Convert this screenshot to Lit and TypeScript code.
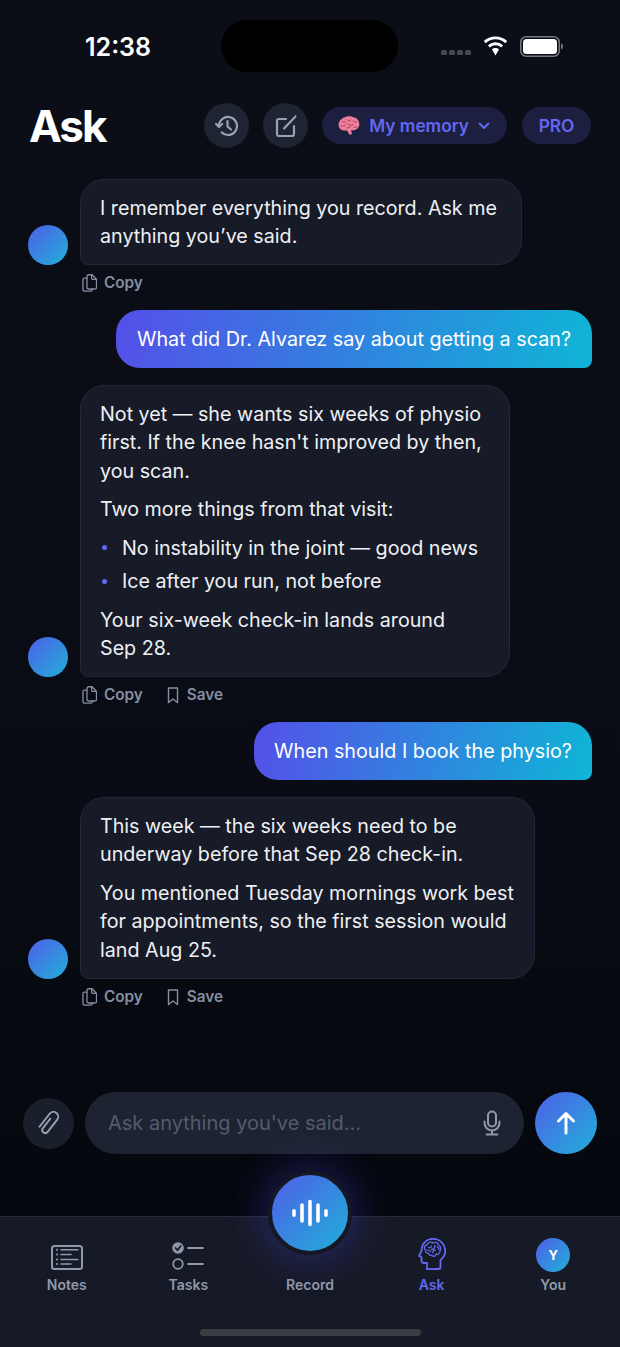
import { LitElement, html, css, svg } from "lit";
import { customElement } from "lit/decorators.js";

const copyIcon = svg`<path d="M8.500 1.500h3.800l4.700 5v8.500a1.700 1.700 0 0 1-1.700 1.700H8.500a1.700 1.700 0 0 1-1.700-1.700V3.200a1.700 1.700 0 0 1 1.700-1.700z"/><path d="M11.800 1.700v3.500a1.300 1.300 0 0 0 1.300 1.300h3.700"/><path d="M6.800 5H4.200a1.700 1.700 0 0 0-1.700 1.700v10.600a1.700 1.700 0 0 0 1.700 1.700h6.600a1.700 1.700 0 0 0 1.700-1.700v-.6"/>`;
const bookmarkIcon = svg`<path d="M4.500 2.500h9v14.500l-4.500-3.500-4.500 3.500z"/>`;

@customElement("app-actions")
class AppActions extends LitElement {
  static properties = { save: { type: Boolean } };
  declare save: boolean;

  static styles = css`
    :host {
      display: flex;
      gap: 24px;
      height: 20px;
      margin: 8px 0 0 52px;
      color: #858fa3;
      font: 600 15.3px/20px Inter, sans-serif;
    }
    .action {
      display: flex;
      align-items: center;
      gap: 7px;
    }
    .copy {
      margin-left: 2px;
    }
    .save {
      gap: 6px;
    }
    svg {
      fill: none;
      stroke: currentColor;
      stroke-width: 1.4;
      stroke-linejoin: round;
      stroke-linecap: round;
    }
  `;

  render() {
    return html`
      <span class="action copy"><svg width="15" height="18" viewBox="1.500 .8 16 19">${copyIcon}</svg>Copy</span>
      ${this.save
        ? html`<span class="action save"><svg width="14" height="18" viewBox="3 1 14 17">${bookmarkIcon}</svg>Save</span>`
        : ""}
    `;
  }
}

@customElement("app-root")
class AppRoot extends LitElement {
  static styles = css`
    :host {
      display: flex;
      flex-direction: column;
      width: 620px;
      height: 1347px;
      overflow: hidden;
      background: linear-gradient(#0b0e16, #090c14 60%, #05070e 90%);
      color: #eef0f4;
      font-family: Inter, sans-serif;
    }
    .status {
      display: flex;
      align-items: center;
      height: 92px;
      padding-right: 57px;
      flex: none;
    }
    .time {
      width: 221px;
      padding: 1px 0 0 85px;
      box-sizing: border-box;
      color: #fff;
      font-size: 25px;
      font-weight: 600;
    }
    .island {
      width: 177px;
      height: 52px;
      border-radius: 26px;
      background: #000;
    }
    .status-right {
      margin-left: auto;
      display: flex;
      align-items: center;
      gap: 11px;
    }
    .dots {
      display: flex;
      gap: 2px;
      margin-top: 13px;
    }
    .dots i {
      width: 6px;
      height: 5px;
      border-radius: 1.5px;
      background: #44474e;
    }
    header {
      display: flex;
      align-items: center;
      height: 45px;
      padding: 11px 29px 0 29px;
      flex: none;
    }
    h1 {
      flex: 1;
      margin: 0;
      font-size: 44px;
      font-weight: 700;
      letter-spacing: -2px;
      color: #fff;
    }
    .round {
      width: 45px;
      height: 45px;
      border-radius: 50%;
      margin-right: 14px;
      background: #1e2431;
      display: flex;
      align-items: center;
      justify-content: center;
      color: #97a2b4;
    }
    .pill {
      height: 37px;
      border-radius: 19px;
      background: #1c1f3f;
      color: #6367f1;
      display: flex;
      align-items: center;
      font-size: 17.3px;
      font-weight: 600;
    }
    .memory {
      padding: 0 17px 0 16px;
      gap: 9px;
      margin-right: 15px;
    }
    .pro {
      width: 69px;
      justify-content: center;
    }
    main {
      flex: 1;
      display: flex;
      flex-direction: column;
      padding: 31px 28px 0;
      font-size: 19.7px;
      line-height: 28.5px;
    }
    .row {
      display: flex;
      align-items: flex-end;
      gap: 12px;
    }
    .avatar {
      width: 40px;
      height: 40px;
      border-radius: 50%;
      background: linear-gradient(135deg, #4f5ee8, #20b0d8);
      flex: none;
    }
    .bubble {
      box-sizing: border-box;
      padding: 13.5px 19px;
      border: 1px solid #232836;
      border-radius: 24px 24px 24px 8px;
      background: #171b27;
    }
    .bubble p {
      margin: 0 0 10px;
    }
    .bubble p:last-child {
      margin: 0;
    }
    ul {
      margin: 0 0 10px;
      padding: 0;
      list-style: none;
    }
    li {
      display: flex;
      align-items: center;
      margin-bottom: 5px;
    }
    li:last-child {
      margin-bottom: 0;
    }
    li::before {
      content: "";
      width: 5px;
      height: 5px;
      margin: 0 15px 0 2px;
      border-radius: 50%;
      background: #6367f1;
    }
    .user {
      align-self: flex-end;
      margin: 17px 0;
      padding: 14.75px 0;
      border: none;
      border-radius: 24px 24px 8px 24px;
      background: linear-gradient(100deg, #5450e8, #0fb5d6);
      color: #fff;
      font-size: 19.75px;
      text-align: center;
    }
    .composer {
      display: flex;
      align-items: center;
      padding: 0 23px;
      height: 62px;
      margin-bottom: 62px;
      flex: none;
    }
    .attach {
      width: 51px;
      height: 51px;
      border-radius: 50%;
      background: #1a1f2c;
      color: #99a3b5;
      display: flex;
      align-items: center;
      justify-content: center;
      margin-right: 11px;
    }
    .input {
      flex: 1;
      height: 62px;
      border-radius: 31px;
      background: #1e2332;
      display: flex;
      align-items: center;
      justify-content: space-between;
      padding: 0 22px 0 23px;
      color: #545b6b;
      font-size: 20px;
      margin-right: 11px;
    }
    .input svg {
      color: #8f99ab;
    }
    .send {
      width: 62px;
      height: 62px;
      border-radius: 50%;
      background: linear-gradient(135deg, #4f5ee8, #20b0d8);
      display: flex;
      align-items: center;
      justify-content: center;
    }
    nav {
      position: relative;
      display: grid;
      grid-template-columns: repeat(5, 1fr);
      height: 130px;
      padding: 0 6px;
      border-top: 1px solid #262b39;
      background: #161a26;
      flex: none;
    }
    .tab {
      display: flex;
      flex-direction: column;
      align-items: center;
      height: 76px;
      justify-content: flex-end;
      gap: 4px;
      color: #8f99ab;
      font-size: 14px;
      font-weight: 600;
      line-height: 17px;
    }
    .tab.active {
      color: #6367f1;
    }
    .tab .icon {
      box-sizing: border-box;
      height: 36px;
      display: flex;
      align-items: center;
      justify-content: center;
    }
    .tab .icon.notes {
      padding-top: 6px;
    }
    .tab .icon.tasks {
      padding-top: 4px;
    }
    .tab .icon.profile {
      padding-top: 2px;
    }
    .you {
      width: 34px;
      height: 34px;
      border-radius: 50%;
      background: linear-gradient(135deg, #4f5ee8, #20b0d8);
      color: #fff;
      font-size: 13px;
      font-weight: 700;
      display: flex;
      align-items: center;
      justify-content: center;
    }
    .record {
      position: absolute;
      left: 268px;
      top: -46px;
      width: 76px;
      height: 76px;
      border: 4px solid #141824;
      border-radius: 50%;
      background: linear-gradient(135deg, #4f5ee8, #20b0d8);
      box-shadow: 0 0 36px 8px rgba(80, 70, 230, 0.28);
      display: flex;
      align-items: center;
      justify-content: center;
    }
    .home {
      position: absolute;
      left: 200px;
      bottom: 11px;
      width: 221px;
      height: 7px;
      border-radius: 4px;
      background: #3a3c42;
    }
    .line {
      fill: none;
      stroke: currentColor;
      stroke-linecap: round;
      stroke-linejoin: round;
    }
  `;

  render() {
    return html`
      <div class="status">
        <div class="time">12:38</div>
        <div class="island"></div>
        <div class="status-right">
          <div class="dots"><i></i><i></i><i></i><i></i></div>
          <svg width="27" height="20" viewBox="1.600 0 22.800 19.500" fill="#fff">
            <path d="M13 3.200c3.700 0 7 1.400 9.500 3.800l1.900-2.100A16.600 16.600 0 0 0 13 .4 16.600 16.600 0 0 0 1.600 4.900L3.500 7A13.700 13.700 0 0 1 13 3.200z"/>
            <path d="M13 9c2.100 0 4.100.8 5.500 2.200l1.900-2.100A11 11 0 0 0 13 6.200 11 11 0 0 0 5.600 9.100l1.900 2.100A8 8 0 0 1 13 9z"/>
            <path d="M13 11.800c-1.300 0-2.500.5-3.400 1.300L13 19l3.400-5.900a5 5 0 0 0-3.400-1.300z"/>
          </svg>
          <svg width="43" height="21" viewBox="0 0 43 21">
            <rect x=".75" y=".75" width="38.500" height="19.500" rx="5.500" fill="none" stroke="#77797e" stroke-width="1.500"/>
            <rect x="3" y="3" width="34" height="15" rx="3.500" fill="#fff"/>
            <path d="M41 7.500c1.200.3 2 1.500 2 3s-.8 2.700-2 3z" fill="#77797e"/>
          </svg>
        </div>
      </div>

      <header>
        <h1>Ask</h1>
        <div class="round">
          <svg class="line" width="24" height="24" viewBox="0 0 24 24" stroke-width="2.200">
            <path d="M4 12a9 9 0 1 1 2.700 6.400"/><path d="M1 9.800l3 3.200 3.200-3"/><path d="M12.500 7v5.500l3.500 3"/>
          </svg>
        </div>
        <div class="round">
          <svg class="line" width="24" height="24" viewBox="0 0 24 24" stroke-width="2.200">
            <path d="M12 5H5a2 2 0 0 0-2 2v13a2 2 0 0 0 2 2h13a2 2 0 0 0 2-2v-8"/><path d="M10 14.500 21.500 2.500"/>
          </svg>
        </div>
        <div class="pill memory">
          <svg width="22" height="20" viewBox="0 0 22 20">
            <path d="M7 1.200C9 .2 13 0 15.500 1.200c3 .5 5.500 3 5.800 6 .4 2.600-.8 5.300-3.300 6.300-1.500.9-3.500.6-5 .8l.8 3.200c.2.900-1 1.500-2 1.100-1-.4-1.800-3-2.800-4.200-2.500.3-5.500 0-7.300-2C.2 10.500.2 7.300 1.700 5 3 3 5 1.700 7 1.200z" fill="#ee7f9a"/>
            <path d="M4 6c2-1 3-.5 4 1M9 3.500c1 1.500 3 1.500 4 .5M15 5c1 1 3 1 4 1M3 10c2 .5 3 0 4.500-1M10 8c1.500 1.500 3.500 1.500 5 .5M9 12c1.500 0 3-.5 3.500-1.500M16 11c1 .5 2 .5 3 0" fill="none" stroke="#b8405f" stroke-width="1" stroke-linecap="round"/>
          </svg>
          <span>My memory</span>
          <svg class="line" width="12" height="8" viewBox="0 0 12 8" stroke-width="2"><path d="M1.500 1.500 6 6l4.500-4.500"/></svg>
        </div>
        <div class="pill pro">PRO</div>
      </header>

      <main>
        <div class="row">
          <div class="avatar"></div>
          <div class="bubble" style="width:442px">I remember everything you record. Ask me anything you’ve said.</div>
        </div>
        <app-actions></app-actions>

        <div class="bubble user" style="width:476px">What did Dr. Alvarez say about getting a scan?</div>

        <div class="row">
          <div class="avatar"></div>
          <div class="bubble" style="width:430px">
            <p>Not yet — she wants six weeks of physio first. If the knee hasn't improved by then, you scan.</p>
            <p>Two more things from that visit:</p>
            <ul>
              <li>No instability in the joint — good news</li>
              <li>Ice after you run, not before</li>
            </ul>
            <p>Your six-week check-in lands around<br />Sep 28.</p>
          </div>
        </div>
        <app-actions save></app-actions>

        <div class="bubble user" style="width:338px">When should I book the physio?</div>

        <div class="row">
          <div class="avatar"></div>
          <div class="bubble" style="width:455px">
            <p>This week — the six weeks need to be underway before that Sep 28 check-in.</p>
            <p>You mentioned Tuesday mornings work best for appointments, so the first session would land Aug 25.</p>
          </div>
        </div>
        <app-actions save></app-actions>
      </main>

      <div class="composer">
        <div class="attach">
          <svg class="line" width="28" height="28" viewBox="0 0 28 28" stroke-width="1.900">
            <g transform="translate(13.500 14) rotate(38)">
              <path d="M-1.200-4.500V7.500a3 3 0 0 0 6 0V-8a4.800 4.800 0 0 0-9.600 0V8.500"/>
            </g>
          </svg>
        </div>
        <div class="input">
          <span>Ask anything you've said...</span>
          <svg class="line" width="20" height="26" viewBox="0 0 20 26" stroke-width="2">
            <rect x="6" y="1.500" width="8" height="15" rx="4"/><path d="M2.500 11.500v1.500a7.500 7.500 0 0 0 15 0v-1.500"/><path d="M10 20.500v3.500M4.500 24.500h11"/>
          </svg>
        </div>
        <div class="send">
          <svg class="line" width="22" height="24" viewBox="0 0 22 24" stroke-width="3" style="color:#fff">
            <path d="M11 22V2.500M3.500 10 11 2.500 18.500 10"/>
          </svg>
        </div>
      </div>

      <nav>
        <div class="tab">
          <div class="icon notes">
            <svg class="line" width="32" height="25" viewBox="0 0 32 25" stroke-width="1.500">
              <rect x="1" y="1" width="30" height="23" rx="2.500" stroke-width="2"/>
              <path d="M10 4.800H27M10 9.500H20M10 14.500H27M10 19H20"/>
              <path d="M6 4.800h.1M6 9.500h.1M6 14.500h.1M6 19h.1" stroke-width="2"/>
            </svg>
          </div>
          Notes
        </div>
        <div class="tab">
          <div class="icon tasks">
            <svg width="32" height="28" viewBox="0 0 32 28">
              <circle cx="6" cy="6" r="5.800" fill="currentColor"/>
              <path class="line" d="M3.500 6l2 2.200 3.200-4.200" style="color:#161a26" stroke-width="1.800"/>
              <circle class="line" cx="6" cy="22" r="4.800" stroke-width="1.800"/>
              <path class="line" d="M16 6h15M16 22h15" stroke-width="1.800"/>
            </svg>
          </div>
          Tasks
        </div>
        <div class="tab"><div class="icon"></div>Record</div>
        <div class="tab active">
          <div class="icon">
            <svg class="line" width="28" height="32" viewBox="0 0 28 32" stroke-width="1.300">
              <path d="M9 31.200V25H6a2.500 2.500 0 0 1-2.500-2.500V19L1 18l2.500-5C3.500 6 8 .8 15 .8 22 .8 27.200 6 27.200 13c0 4-2.200 7-4.700 9v7a2 2 0 0 1-2 2z" stroke-width="1.800"/>
              <path d="M6.500 11c-.5-2.500 1-4 2.500-4C9.800 4.500 13 3.300 15 5c2-1.300 5-.5 5.500 1.800 2.200 1 2.800 4 1.500 5.700.5 2.500-1.800 4.500-4 3.700-.3 2.300-3 3-4 1-1.500.8-3.300-.3-3.200-1.900-2.300.3-4-1.800-2.800-3.300z"/>
              <path d="M10.500 9.500c1.500.6 2.800 0 3-1.500M13.500 11.500c2-.3 3.500-1.800 3.300-4M15 14.800c-.4-1.700.8-2.800 2.500-2.600M19 8.800c1.300.3 2 1.200 1.800 2.500M10 12.500c1.300-.2 2 .3 2.500 1.300"/>
            </svg>
          </div>
          Ask
        </div>
        <div class="tab">
          <div class="icon profile"><div class="you">Y</div></div>
          You
        </div>
        <div class="record">
          <svg class="line" width="36" height="28" viewBox="0 0 36 28" style="color:#fff" stroke-width="3.600">
            <path d="M2 11.800v4.400M10 6v16M18 2.500v23M26 6v16M34 11.800v4.400"/>
          </svg>
        </div>
        <div class="home"></div>
      </nav>
    `;
  }
}
